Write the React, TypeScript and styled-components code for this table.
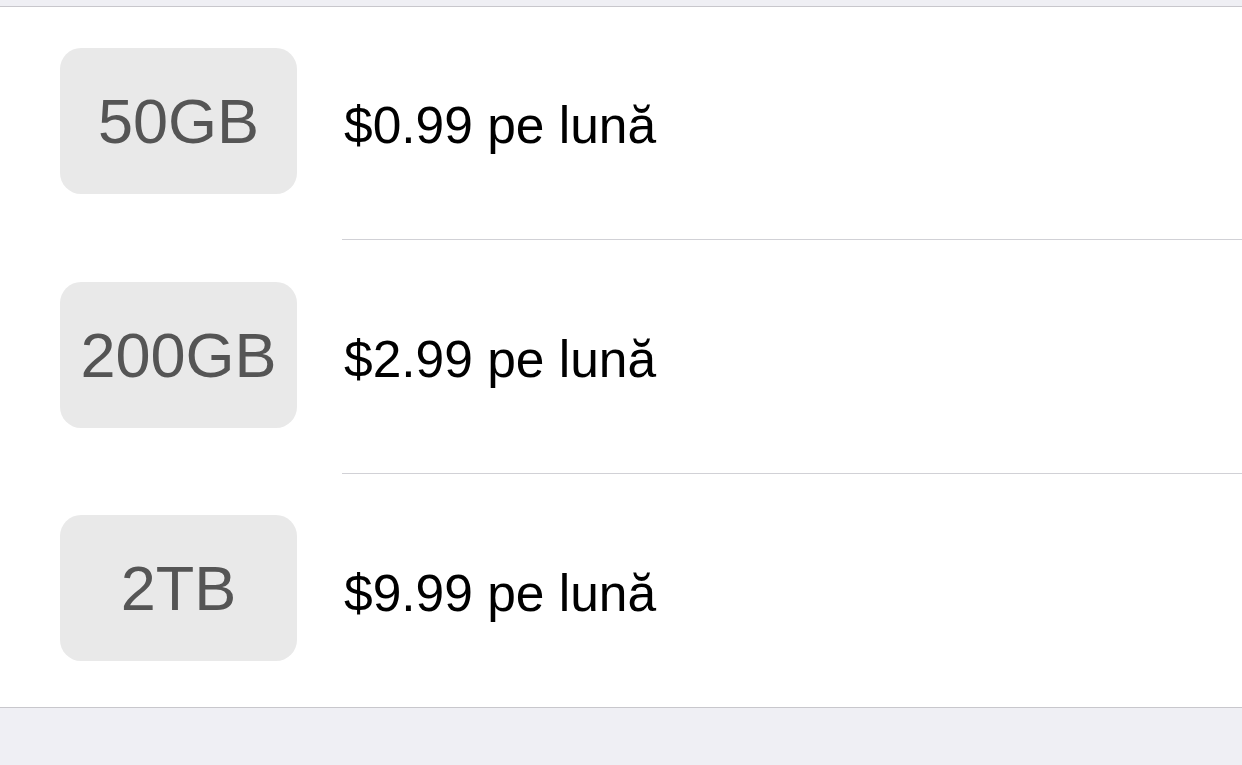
import styled, { createGlobalStyle } from "styled-components";

type Plan = {
  size: string;
  price: string;
};

const PLANS: Plan[] = [
  { size: "50GB", price: "$0.99 pe lună" },
  { size: "200GB", price: "$2.99 pe lună" },
  { size: "2TB", price: "$9.99 pe lună" },
];

const GlobalStyle = createGlobalStyle`
  html, body {
    margin: 0;
    padding: 0;
    background: #efeff4;
    font-family: "Liberation Sans", Arial, sans-serif;
  }
`;

export default function App() {
  return (
    <>
      <GlobalStyle />
      <Page>
        <TopGap />
        <List>
          {PLANS.map((plan, i) => {
            const last = i === PLANS.length - 1;
            return (
              <Row key={plan.size} $tall={i === 1}>
                <SizeBadge>{plan.size}</SizeBadge>
                <RowBody $last={last}>
                  <Price>{plan.price}</Price>
                </RowBody>
              </Row>
            );
          })}
        </List>
      </Page>
    </>
  );
}

const Page = styled.div`
  width: 1242px;
  height: 765px;
  background: #efeff4;
  overflow: hidden;
`;

const TopGap = styled.div`
  height: 6px;
`;

const List = styled.div`
  background: #fff;
  border-top: 1px solid #c8c7cc;
  border-bottom: 1px solid #c8c7cc;
  display: flex;
  flex-direction: column;
`;

const Row = styled.div<{ $tall?: boolean }>`
  display: flex;
  align-items: stretch;
  padding-left: 60px;
  height: ${(p) => (p.$tall ? 234 : 233)}px;
`;

const SizeBadge = styled.div`
  align-self: center;
  flex: 0 0 auto;
  width: 237px;
  height: 146px;
  margin-bottom: 5px;
  border-radius: 21px;
  background: #e9e9e9;
  color: #555555;
  font-family: "Liberation Sans", Arial, sans-serif;
  font-size: 63px;
  display: flex;
  align-items: center;
  justify-content: center;
`;

const RowBody = styled.div<{ $last?: boolean }>`
  flex: 1;
  margin-left: 45px;
  display: flex;
  align-items: center;
  border-bottom: ${(p) => (p.$last ? "none" : "1px solid #d1d1d6")};
`;

const Price = styled.div`
  font-family: "Liberation Sans", Arial, sans-serif;
  font-size: 51.5px;
  color: #000;
  margin-left: 2px;
  padding-top: 4px;
`;
